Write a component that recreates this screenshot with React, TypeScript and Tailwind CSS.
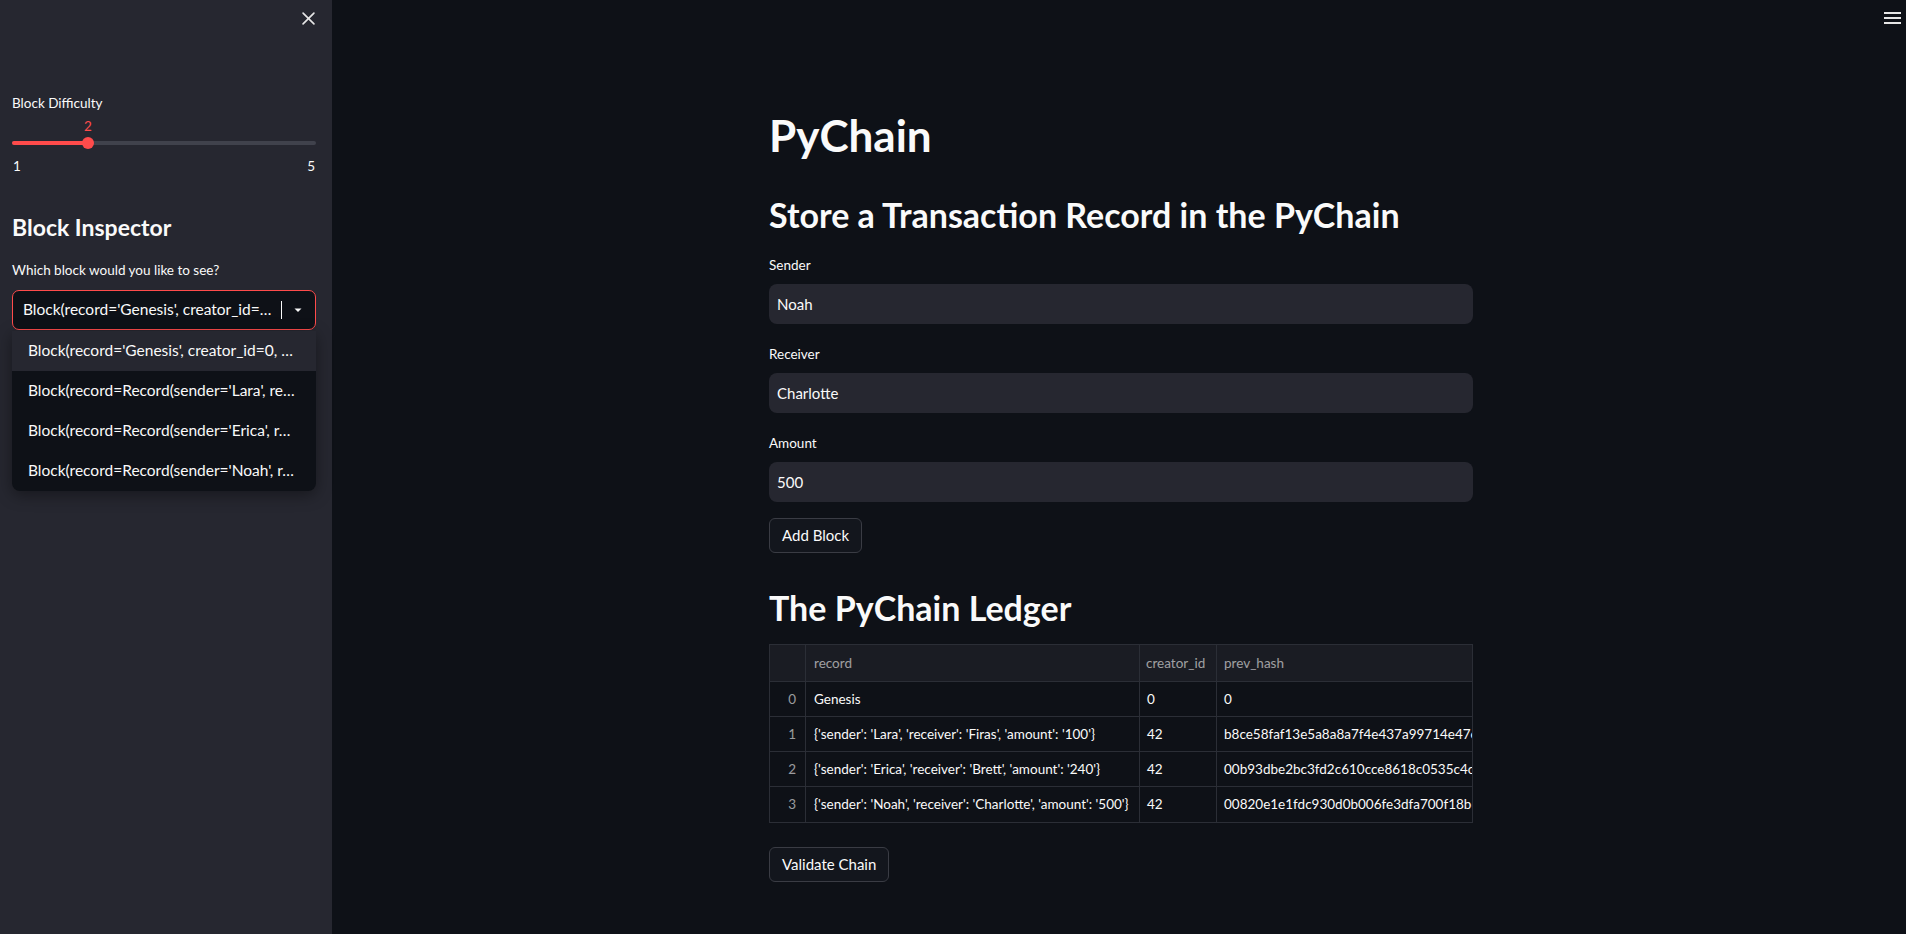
import React from "react";

const font = { fontFamily: "Lato, 'Noto Sans', sans-serif" };

const options = [
  "Block(record='Genesis', creator_id=0, …",
  "Block(record=Record(sender='Lara', re…",
  "Block(record=Record(sender='Erica', r…",
  "Block(record=Record(sender='Noah', r…",
];

const rows = [
  { i: 0, record: "Genesis", creator: "0", hash: "0" },
  {
    i: 1,
    record: "{'sender': 'Lara', 'receiver': 'Firas', 'amount': '100'}",
    creator: "42",
    hash: "b8ce58faf13e5a8a8a7f4e437a99714e47e54",
  },
  {
    i: 2,
    record: "{'sender': 'Erica', 'receiver': 'Brett', 'amount': '240'}",
    creator: "42",
    hash: "00b93dbe2bc3fd2c610cce8618c0535c4cb7e1a0d9f3",
  },
  {
    i: 3,
    record: "{'sender': 'Noah', 'receiver': 'Charlotte', 'amount': '500'}",
    creator: "42",
    hash: "00820e1e1fdc930d0b006fe3dfa700f18b649",
  },
];

const Field = ({ label, value }: { label: string; value: string }) => (
  <div className="flex flex-col">
    <label className="text-[13.5px] leading-[20px] text-[#fafafa]">{label}</label>
    <div className="mt-[9px] h-[40px] rounded-[8px] bg-[#262730] flex items-center px-[8px] text-[15px] text-[#fafafa]">
      {value}
    </div>
  </div>
);

const Sidebar = () => (
  <aside className="w-[332px] shrink-0 bg-[#262730] relative px-[12px]">
    {/* close */}
    <button className="absolute left-[302px] top-[12px] w-[13px] h-[13px]">
      <svg viewBox="0 0 12 12" width="13" height="13" stroke="#e6e6e6" strokeWidth="1.5" strokeLinecap="round">
        <path d="M1 1 L11 11 M11 1 L1 11" />
      </svg>
    </button>

    <div className="pt-[93px] text-[13.5px] leading-[20px] text-[#fafafa]">Block Difficulty</div>

    {/* slider */}
    <div className="relative w-[304px] h-[40px] mt-[3px]">
      <div className="absolute left-[70px] top-0 w-[12px] text-center text-[13.5px] leading-[20px] text-[#ff4b4b]">2</div>
      <div className="absolute left-0 right-0 top-[25px] h-[4px] rounded-full bg-[#40424c]" />
      <div className="absolute left-0 w-[76px] top-[25px] h-[4px] rounded-full bg-[#ff4b4b]" />
      <div className="absolute left-[70px] top-[21px] w-[12px] h-[12px] rounded-full bg-[#ff4b4b]" />
    </div>
    <div className="flex justify-between w-[304px] text-[13.5px] leading-[20px] text-[#fafafa]">
      <span className="pl-[1px]">1</span>
      <span className="pr-[1px]">5</span>
    </div>

    <h2 className="mt-[36px] text-[23px] leading-[30px] font-bold text-[#fafafa]">Block Inspector</h2>
    <div className="mt-[18px] text-[13.5px] leading-[20px] text-[#fafafa]">Which block would you like to see?</div>

    {/* select */}
    <div className="relative mt-[10px] w-[304px]">
      <div className="h-[40px] rounded-[7px] border border-[#ff4b4b] bg-[#0e1117] flex items-center pl-[10px] pr-[8px]">
        <span className="flex-1 whitespace-nowrap overflow-hidden text-[15.5px] text-[#fafafa]">
          Block(record='Genesis', creator_id=…
        </span>
        <span className="w-px h-[18px] bg-[#fafafa] mx-[8px]" />
        <svg width="16" height="16" viewBox="0 0 16 16" className="mr-[1px]">
          <path d="M4.5 6.5 L8 10 L11.5 6.5 Z" fill="#fafafa" />
        </svg>
      </div>
      <ul className="absolute left-0 top-[41px] w-[304px] rounded-b-[8px] bg-[#0e1117] shadow-[0_4px_16px_rgba(0,0,0,0.4)] overflow-hidden">
        {options.map((o, i) => (
          <li
            key={i}
            className={
              "h-[40px] flex items-center pl-[16px] pr-[10px] whitespace-nowrap overflow-hidden text-[15.5px] text-[#fafafa] " +
              (i === 0 ? "bg-[#262730]" : "")
            }
          >
            {o}
          </li>
        ))}
      </ul>
    </div>
  </aside>
);

const Button = ({ children }: { children: React.ReactNode }) => (
  <button className="h-[35px] px-[12px] rounded-[6px] border border-[#3a3c44] bg-[#13161d] text-[15px] text-[#fafafa]">
    {children}
  </button>
);

const Ledger = () => (
  <div className="mt-[14px] w-[704px] border border-[#2b2e36] text-[13.5px] text-[#fafafa] overflow-hidden">
    <div className="grid grid-cols-[36px_334px_77px_1fr] h-[37px] bg-[#1a1c23] border-b border-[#2b2e36] text-[#fafafa99]">
      <div className="border-r border-[#2b2e36]" />
      <div className="border-r border-[#2b2e36] flex items-center px-[8px]">record</div>
      <div className="border-r border-[#2b2e36] flex items-center px-[6px]">creator_id</div>
      <div className="flex items-center px-[7px]">prev_hash</div>
    </div>
    {rows.map((r, idx) => (
      <div
        key={r.i}
        className={
          "grid grid-cols-[36px_334px_77px_1fr] h-[35px] " + (idx < rows.length - 1 ? "border-b border-[#2b2e36]" : "")
        }
      >
        <div className="border-r border-[#2b2e36] flex items-center justify-end pr-[9px] text-[#fafafa99]">{r.i}</div>
        <div className="border-r border-[#2b2e36] flex items-center px-[8px] whitespace-nowrap overflow-hidden">
          {r.record}
        </div>
        <div className="border-r border-[#2b2e36] flex items-center px-[7px]">{r.creator}</div>
        <div className="flex items-center px-[7px] whitespace-nowrap overflow-hidden">{r.hash}</div>
      </div>
    ))}
  </div>
);

export default function App() {
  return (
    <div className="flex w-[1906px] h-[934px] bg-[#0e1117] overflow-hidden" style={font}>
      <Sidebar />
      <main className="flex-1 relative flex justify-center pl-[4px]">
        <button className="absolute right-[5px] top-[12px] flex flex-col gap-[3px]">
          <span className="block w-[17px] h-[2px] bg-[#e6e6e6]" />
          <span className="block w-[17px] h-[2px] bg-[#e6e6e6]" />
          <span className="block w-[17px] h-[2px] bg-[#e6e6e6]" />
        </button>
        <div className="w-[704px] pt-[109px]">
          <h1 className="text-[44px] leading-[52px] font-bold text-[#fafafa]">PyChain</h1>
          <h2 className="mt-[32px] text-[34px] leading-[44px] font-bold text-[#fafafa]">
            Store a Transaction Record in the PyChain
          </h2>
          <div className="mt-[18px] flex flex-col gap-[20px]">
            <Field label="Sender" value="Noah" />
            <Field label="Receiver" value="Charlotte" />
            <Field label="Amount" value="500" />
          </div>
          <div className="mt-[16px]">
            <Button>Add Block</Button>
          </div>
          <h2 className="mt-[33px] text-[34px] leading-[44px] font-bold text-[#fafafa]">The PyChain Ledger</h2>
          <Ledger />
          <div className="mt-[24px]">
            <Button>Validate Chain</Button>
          </div>
        </div>
      </main>
    </div>
  );
}
